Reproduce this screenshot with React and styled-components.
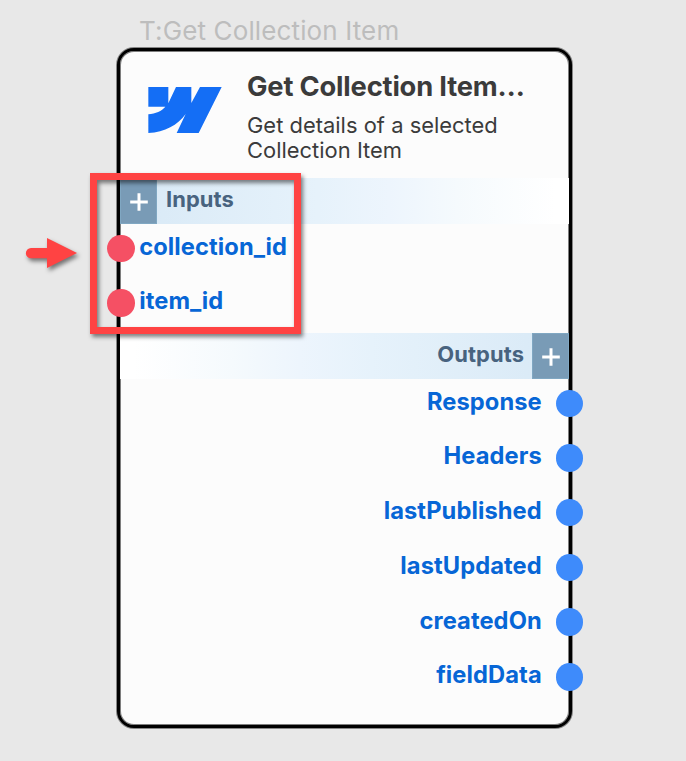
import React from "react";
import styled, { createGlobalStyle } from "styled-components";

const GlobalStyle = createGlobalStyle`
  * { box-sizing: border-box; }
  body {
    margin: 0;
    background: #e8e8e8;
    font-family: Inter, "Liberation Sans", sans-serif;
  }
`;

const Canvas = styled.main`
  position: relative;
  width: 686px;
  height: 761px;
  overflow: hidden;
  background: #e8e8e8;
  padding: 16px 114px 0 117px;
`;

const NodeLabel = styled.div`
  height: 32px;
  padding-left: 22px;
  font-size: 26px;
  letter-spacing: 0.13px;
  line-height: 30px;
  color: #bdbdbd;
  white-space: nowrap;
`;

const Card = styled.section`
  width: 455px;
  height: 680px;
  border: 3px solid #000;
  border-radius: 17px;
  background: #fcfcfc;
  box-shadow: 0 0 0 1px rgba(0, 0, 0, 0.42), inset 0 0 0 1px rgba(0, 0, 0, 0.5);
`;

const Header = styled.header`
  display: flex;
  height: 127px;
  padding: 20px 0 0 27px;
`;

const Logo = styled.svg`
  flex: none;
  width: 75px;
  height: 48px;
  margin-top: 15px;
`;

const Heading = styled.div`
  margin-left: 25px;
  color: #3b3b3b;
  white-space: nowrap;
`;

const Title = styled.h1`
  margin: 0;
  font-size: 27.3px;
  letter-spacing: -0.17px;
  line-height: 32px;
  font-weight: 700;
`;

const Description = styled.p`
  margin: 10px 0 0;
  font-size: 21.9px;
  letter-spacing: 0.02px;
  line-height: 25px;
`;

const Band = styled.div`
  display: flex;
  flex-direction: ${(p) => (p.$end ? "row-reverse" : "row")};
  height: 46px;
  background: linear-gradient(
    ${(p) => (p.$end ? "to left" : "to right")},
    #d8e9f6 0%,
    #e6f2fb 44%,
    #edf5fd 60%,
    #f5fafd 75%,
    #ffffff 97%
  );
`;

const AddButton = styled.button`
  display: grid;
  place-items: center;
  width: 37px;
  height: 46px;
  padding: 2px 0 0;
  border: 1px solid #80a7c2;
  background: #799bb6;
`;

const BandTitle = styled.h2`
  margin: 0 ${(p) => (p.$end ? "8px" : "9px")} 0 9px;
  font-size: 21.9px;
  letter-spacing: 0.1px;
  line-height: 42px;
  font-weight: 700;
  color: #48637f;
`;

const Ports = styled.ul`
  display: flex;
  flex-direction: column;
  gap: 27.2px;
  height: ${(p) => (p.$end ? "auto" : "109px")};
  margin: 0 ${(p) => (p.$end ? "-14.3px" : "0")} 0 ${(p) => (p.$end ? "0" : "-12.7px")};
  padding: 10.6px 0 0;
  list-style: none;
`;

const Port = styled.li`
  display: flex;
  flex-direction: ${(p) => (p.$end ? "row-reverse" : "row")};
  align-items: center;
  gap: ${(p) => (p.$end ? "14px" : "4.4px")};
  height: 27.5px;
`;

const Dot = styled.span`
  flex: none;
  width: 27.5px;
  height: 27.5px;
  border-radius: 50%;
  background: ${(p) => (p.$end ? "#3e8bfb" : "#f55064")};
`;

const PortName = styled.span`
  font-size: 23.7px;
  letter-spacing: 0.08px;
  line-height: 28px;
  margin-top: -3.2px;
  font-weight: 700;
  color: #0766d6;
`;

/* Annotation drawn over the canvas */
const Frame = styled.div`
  position: absolute;
  left: 90px;
  top: 173px;
  width: 211px;
  height: 161px;
  border: 7px solid #ff4343;
  filter: drop-shadow(2px 3px 2px rgba(0, 0, 0, 0.5));
`;

const Arrow = styled.svg`
  position: absolute;
  left: 20px;
  top: 232px;
  width: 64px;
  height: 48px;
  filter: drop-shadow(2px 3px 2px rgba(0, 0, 0, 0.5));
`;

const outputs = ["Response", "Headers", "lastPublished", "lastUpdated", "createdOn", "fieldData"];
const inputs = ["collection_id", "item_id"];

const Plus = () => (
  <svg width="18" height="18" viewBox="0 0 18 18">
    <path d="M9 0.2V17.8M0.2 9H17.8" stroke="#fff" strokeWidth="3" />
  </svg>
);

function PortSection({ title, names, end }) {
  return (
    <>
      <Band $end={end}>
        <AddButton aria-label={`Add to ${title}`}>
          <Plus />
        </AddButton>
        <BandTitle $end={end}>{title}</BandTitle>
      </Band>
      <Ports $end={end}>
        {names.map((name) => (
          <Port key={name} $end={end}>
            <Dot $end={end} />
            <PortName>{name}</PortName>
          </Port>
        ))}
      </Ports>
    </>
  );
}

export default function App() {
  return (
    <>
      <GlobalStyle />
      <Canvas>
        <NodeLabel>T:Get Collection Item</NodeLabel>
        <Card>
          <Header>
            <Logo viewBox="36 33 225 144">
              <path
                fill="#146ef5"
                d="M40 36H100V85L123 36H169V84L195 36H260L191 174H125L152 117C128 150 90 172 40 174V118C62 116 80 108 91 95H40Z"
              />
            </Logo>
            <Heading>
              <Title>Get Collection Item…</Title>
              <Description>
                Get details of a selected
                <br />
                Collection Item
              </Description>
            </Heading>
          </Header>
          <PortSection title="Inputs" names={inputs} />
          <PortSection title="Outputs" names={outputs} end />
        </Card>
        <Frame />
        <Arrow viewBox="20 232 64 48">
          <path fill="#ff4343" d="M31 248H47V238L77 253L47 268V258.300H31A5.150 5.150 0 0 1 31 248Z" />
        </Arrow>
      </Canvas>
    </>
  );
}
